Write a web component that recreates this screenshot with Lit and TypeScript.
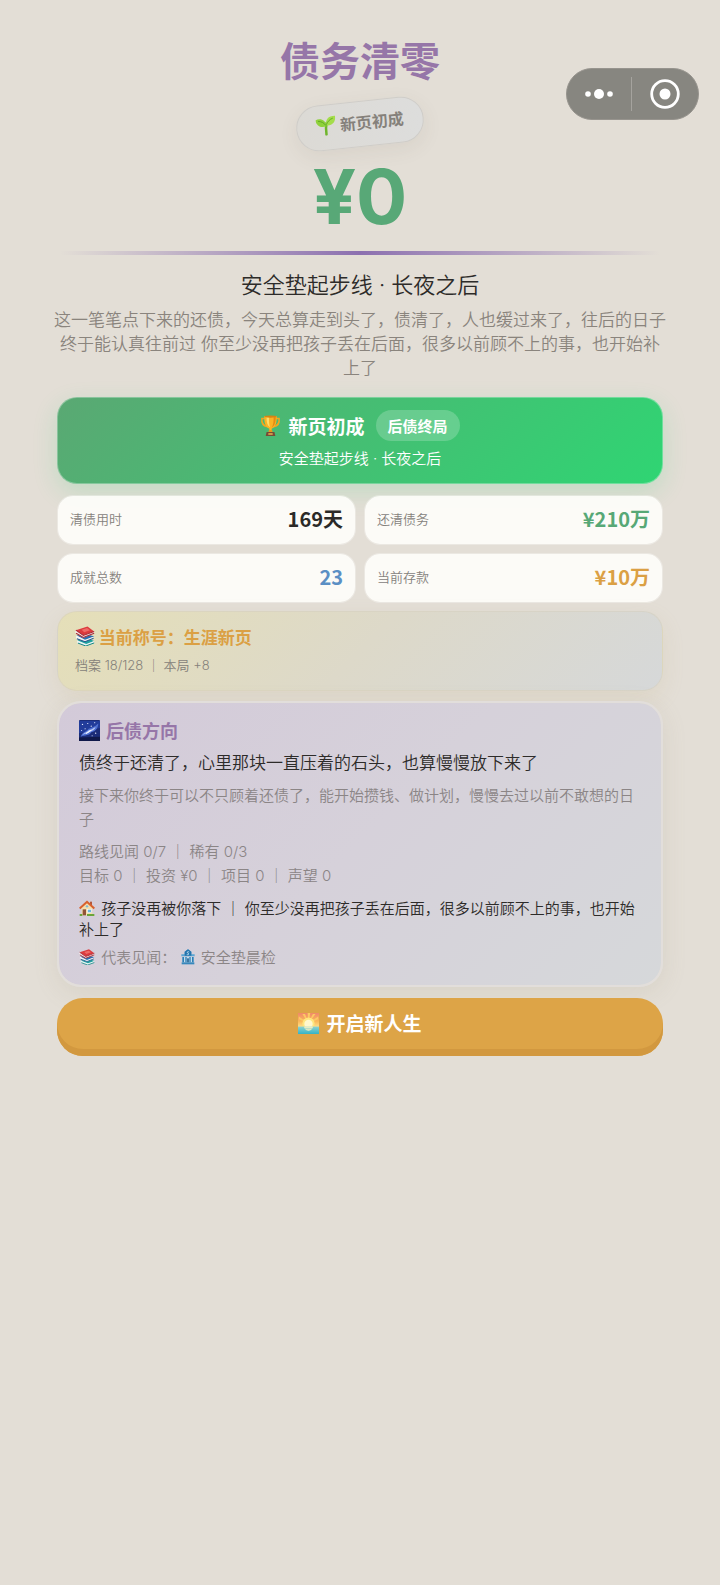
import { LitElement, html, css, svg } from "lit";
import { customElement, property } from "lit/decorators.js";

const glyphs: Record<string, unknown> = {
  seedling: svg`
    <path d="M11.500 23C11.200 17 11.600 13 13 9" fill="none" stroke="#6fb52c" stroke-width="3" stroke-linecap="round"/>
    <path d="M12.500 13C5 15 .5 10.500 0 4.500C6 2 12.500 5 12.500 13Z" fill="#8fd13c"/>
    <path d="M12.500 12C11.500 5 16 .5 24 1.500C24.500 8.500 19.500 13.500 12.500 12Z" fill="#a4dd4b"/>
    <path d="M3 6C7 6.500 10 8.500 12 12M21 4C17 5 14.500 7.500 12.500 11" fill="none" stroke="#5da324" stroke-width="1"/>`,
  trophy: svg`
    <path d="M6 4H2.200C1.500 9 4 12.500 8.500 13.500M18 4H21.800C22.500 9 20 12.500 15.500 13.500" fill="none" stroke="#f2a51f" stroke-width="1.800"/>
    <path d="M5 1H19C19.500 8 18 13.500 13.500 15.500L13 19H11L10.500 15.500C6 13.500 4.500 8 5 1Z" fill="#fbb324"/>
    <path d="M7.500 2.500H10.500C10 7 10.500 11 11.500 14C8.500 12 7.200 8 7.500 2.500Z" fill="#ffdc6a"/>
    <path d="M15.500 2H18C18 8 17 12 13.500 14.500C15.300 11 15.800 7 15.500 2Z" fill="#e58a13"/>
    <ellipse cx="12" cy="1.800" rx="7" ry="1.200" fill="#d98312"/>
    <path d="M10.300 17H13.700L14.500 20H9.500Z" fill="#e99a1c"/>
    <path d="M7.500 19.500H16.500L17.500 24H6.500Z" fill="#7a4a35"/>
    <rect x="9.500" y="20.800" width="5" height="1.800" fill="#e0b04e"/>`,
  books: svg`
    <path d="M3 17.500L13 14L23 18L13.500 22.500Z" fill="#1fa3a0"/>
    <path d="M3 17.500C2 19 2.300 20.500 3.500 21L13 24L23 20V18L13.500 21.500Z" fill="#e9f3f3"/>
    <path d="M3.500 20.500L13 24L23 20.300" fill="none" stroke="#158784" stroke-width="1.200"/>
    <path d="M2 11.500L12 9L23 12.500L12 17Z" fill="#2c6fb0"/>
    <path d="M2 11.500C.8 13 1 14.800 2.500 15.500L12 19L22 15V12.800L12 16.500Z" fill="#f2f2f2"/>
    <path d="M2.300 15.200L12 18.800L22.300 14.800" fill="none" stroke="#24588f" stroke-width="1.300"/>
    <path d="M1 5L15 .5L23 6.500L10 11.500Z" fill="#dc3a3e"/>
    <path d="M1 5C0 6.500 .3 8.500 1.500 9L10 14L23 9V6.500L10 11.200Z" fill="#f4eeee"/>
    <path d="M1.300 8.800L10 13.800L23 8.800M1 5L10 11.300L23 6.500" fill="none" stroke="#a92a34" stroke-width="1.300"/>
    <path d="M8 4.500L14.500 2.500L18 5L11 7.500Z" fill="#ee6a66"/>`,
  galaxy: svg`
    <rect width="24" height="24" rx="1" fill="#1b2c78"/>
    <path d="M0 1H24V9L0 15Z" fill="#223c9a"/>
    <path d="M0 20L24 19V24H0Z" fill="#10194a"/>
    <path d="M2 19C4 13 8 14 11 10C14 9 18 8 22 4C22 9 19 13 14 14C12 18 7 17 2 19Z" fill="#4f70d2"/>
    <path d="M4 17C6 14.500 9 14.500 11.500 11.500C14 11.500 16 9.500 19 8C18 11 15.500 12.500 12.500 13.500C10 16 7 15.500 4 17Z" fill="#b9c8f5"/>
    <path d="M8 15.500L11 13.500L14 11.500" stroke="#f2f5ff" stroke-width="1.200" fill="none"/>
    <g fill="#e8eeff"><circle cx="4" cy="5" r=".8"/><circle cx="10" cy="4" r=".7"/><circle cx="14" cy="7" r=".7"/><circle cx="7" cy="10" r=".7"/><circle cx="19" cy="15" r=".8"/><circle cx="15" cy="18" r=".6"/><circle cx="3" cy="12" r=".6"/><circle cx="18" cy="3" r=".6"/></g>`,
  house: svg`
    <rect x="16.500" y="2.500" width="3" height="6" fill="#b3573a"/>
    <path d="M4 11L12 3.500L20 11V23H4Z" fill="#f6dfae"/>
    <path d="M12 .8L0 11.800L2 13.800L12 4.800L22 13.800L24 11.800Z" fill="#d8622f"/>
    <rect x="5.500" y="14" width="5" height="9" fill="#8f5338"/>
    <rect x="13" y="14" width="5.500" height="5" fill="#6cb5df" stroke="#fff" stroke-width=".8"/>
    <circle cx="12" cy="9.500" r="1.800" fill="#7db8d8"/>
    <path d="M1 21H5V24H1ZM12 21H23V24H12Z" fill="#6ba53a"/>`,
  bank: svg`
    <path d="M7 8V4L12 .5L17 4V8H22V11H2V8Z" fill="#5aa5d2"/>
    <path d="M7 4L12 .5L17 4V10H7Z" fill="#2474ad"/>
    <path d="M13.800 4.500C11 3 9.800 5.500 12 6.200C14.200 7 13 9.300 10.200 8.300" fill="none" stroke="#d8edf8" stroke-width="1.200"/>
    <path d="M3.500 12H20.500V20H3.500Z" fill="#c3dcec"/>
    <path d="M3.500 12H6V20H3.500ZM8 12H10V20H8ZM14 12H16V20H14ZM18 12H20.500V20H18Z" fill="#2c7fb6"/>
    <rect x="10.800" y="14" width="2.400" height="6" fill="#1d5c8c"/>
    <rect x="2.500" y="20" width="19" height="3" fill="#3788bc"/>`,
  sunrise: svg`
    <defs>
      <linearGradient id="sky" x1="0" y1="0" x2="0" y2="1"><stop offset="0" stop-color="#f0886a"/><stop offset=".6" stop-color="#fbb95a"/><stop offset="1" stop-color="#ffe08a"/></linearGradient>
      <linearGradient id="sea" x1="0" y1="0" x2="0" y2="1"><stop offset="0" stop-color="#8ed2cf"/><stop offset="1" stop-color="#35b3c6"/></linearGradient>
    </defs>
    <rect width="24" height="16" fill="url(#sky)"/>
    <path d="M12 12L5 1H8L12 12L11 0H14L12 12L17 1H20L12 12L23 4V7L12 12L1 4V7Z" fill="#fdc964"/>
    <circle cx="12" cy="12" r="7" fill="#ffe57e"/>
    <circle cx="12" cy="12.500" r="4.800" fill="#fff7cf"/>
    <rect y="15.500" width="24" height="8.500" fill="url(#sea)"/>
    <path d="M7 15.500H17C17 18 15 20 12 20.500C9 20 7 18 7 15.500Z" fill="#f6f1c4"/>
    <path d="M8 17.500H16M9.500 19.500H14.500" stroke="#8fd0c4" stroke-width=".8"/>`,
};

@customElement("pic-glyph")
export class PicGlyph extends LitElement {
  @property() name = "";

  static styles = css`
    :host { display: inline-block; width: 1em; height: 1em; vertical-align: -2px; flex: none; }
    svg { display: block; width: 100%; height: 100%; }
  `;

  render() {
    return html`<svg viewBox="0 0 24 24" aria-hidden="true">${glyphs[this.name]}</svg>`;
  }
}

interface Stat { label: string; value: string; tone: string; }

@customElement("app-root")
export class AppRoot extends LitElement {
  private stats: Stat[] = [
    { label: "清债用时", value: "169天", tone: "ink" },
    { label: "还清债务", value: "¥210万", tone: "green" },
    { label: "成就总数", value: "23", tone: "blue" },
    { label: "当前存款", value: "¥10万", tone: "gold" },
  ];

  static styles = css`
    :host {
      display: block;
      min-height: 100vh;
      background: #e3ded6;
      color: #2d2b29;
      font-family: "Noto Sans CJK SC", sans-serif;
      font-size: 15px;
      box-sizing: border-box;
    }
    *, *::before { box-sizing: border-box; }
    h1, h2, h3, p, dl, dt, dd { margin: 0; }
    p { font-family: Inter, "Noto Sans CJK SC", sans-serif; font-weight: 350; }

    .capsule {
      position: absolute;
      top: 68px;
      right: 21px;
      display: grid;
      grid-template-columns: 64fr 1px 66fr;
      align-items: center;
      width: 133px;
      height: 52px;
      border: 1px solid #97948e;
      border-radius: 26px;
      background: #878680;
    }
    .capsule button {
      display: grid;
      place-items: center;
      height: 100%;
      padding: 0;
      border: 0;
      background: none;
    }
    .capsule .bar { height: 34px; background: #a5a39e; }

    .hero {
      display: flex;
      flex-direction: column;
      align-items: center;
      padding: 29px 52px 0;
      text-align: center;
    }
    h1 { color: #9676a8; font-size: 40px; line-height: 60px; font-weight: 700; }
    .badge {
      display: flex;
      align-items: center;
      gap: 4px;
      height: 46px;
      margin-top: 12px;
      padding: 0 19px 4px;
      border: 1px solid #cfcdc9;
      border-radius: 23px;
      background: linear-gradient(90deg, #dcdad5, #dddddc);
      box-shadow: 0 6px 20px rgba(90, 80, 60, 0.08);
      color: #85817b;
      font-size: 16px;
      font-weight: 700;
      transform: rotate(-6deg);
    }
    .badge pic-glyph { font-size: 20px; }
    .amount {
      margin-top: 9px;
      color: #58a877;
      font: 700 76px/80px Inter, sans-serif;
      font-optical-sizing: none;
    }
    .rule {
      align-self: stretch;
      height: 4px;
      margin: 15px 8px 0;
      background: linear-gradient(90deg, transparent, #8c70b0 50%, transparent);
    }
    .subtitle { margin-top: 14px; font-size: 22px; line-height: 32px; }
    .story { margin-top: 7px; color: #8a847d; font-size: 17px; line-height: 24px; text-wrap: nowrap; }

    .cards { display: flex; flex-direction: column; padding: 0 57px; margin-top: 17px; }

    .banner {
      display: flex;
      flex-direction: column;
      align-items: center;
      gap: 7px;
      padding: 12px 16px 13px;
      border: 1px solid rgba(255, 255, 255, 0.3);
      border-radius: 20px;
      background: linear-gradient(135deg, #5aa873, #2fd573) border-box;
      box-shadow: 0 8px 24px rgba(46, 204, 113, 0.18);
      color: #fff;
    }
    .banner-head { display: flex; align-items: center; }
    .banner-head pic-glyph { font-size: 21px; margin-right: 7px; }
    .banner h2 { font-size: 19px; line-height: 31px; font-weight: 700; }
    .tag {
      margin-left: 11px;
      padding: 0 12px;
      border-radius: 16px;
      background: rgba(255, 255, 255, 0.2);
      font-size: 15px;
      line-height: 31px;
      font-weight: 700;
    }
    .banner p { line-height: 22px; }

    .stats { display: grid; grid-template-columns: 1fr 1fr; gap: 8px; margin-top: 11px; }
    .stat {
      display: flex;
      align-items: center;
      justify-content: space-between;
      height: 50px;
      padding: 0 12px 3px;
      border: 1px solid rgba(255, 255, 255, 0.3);
      border-radius: 16px;
      background: rgba(255, 255, 252, 0.88) padding-box;
    }
    .stat dt { color: #85817c; font-size: 13px; font-weight: 350; }
    .stat dd { font-size: 20px; font-weight: 700; }
    .ink { color: #2b2a28; }
    .green { color: #57a876; }
    .blue { color: #5b8fc4; }
    .gold { color: #dba044; }

    .honor {
      margin-top: 8px;
      padding: 13px 17px 15px;
      border: 1px solid rgba(215, 208, 190, 0.6);
      border-radius: 20px;
      background: linear-gradient(135deg, #e5dfb8, #ddd9c9 50%, #d6d8d9);
      box-shadow: 0 8px 22px rgba(190, 170, 110, 0.14);
    }
    .honor h3 { color: #dba044; font-size: 17px; line-height: 24px; font-weight: 700; }
    .honor p { margin-top: 6px; color: #85817a; font-size: 13px; line-height: 20px; }
    .honor pic-glyph { font-size: 20px; }

    .path {
      display: flex;
      flex-direction: column;
      gap: 8px;
      margin-top: 10px;
      padding: 15px 20px 17px;
      border: 2px solid #e2dedb;
      border-radius: 24px;
      background: linear-gradient(135deg, #d3cad9, #d6d1da 50%, #d6d8da) padding-box;
      box-shadow: 0 6px 24px rgba(150, 140, 110, 0.14);
      line-height: 24px;
    }
    .path h3 { color: #9676a8; font-size: 18px; font-weight: 700; }
    .path h3 pic-glyph { font-size: 21px; margin-right: 2px; vertical-align: -3px; }
    .path p pic-glyph { font-size: 16px; }
    .kin pic-glyph, .seen pic-glyph:first-child { margin-right: 2px; }
    .lead { font-size: 17px; line-height: 26px; }
    .soft { color: #8b8586; }
    .kin { margin-top: 2px; line-height: 21px; }
    .seen { line-height: 20px; }

    .restart {
      display: flex;
      align-items: center;
      justify-content: center;
      gap: 7px;
      width: 100%;
      height: 58px;
      margin-top: 11px;
      padding: 0 16px 8px;
      border: 0;
      border-radius: 26px;
      background: #dda447;
      box-shadow: inset 0 -7px 0 #d2983f;
      color: #fff;
      font: 700 19px/28px "Noto Sans CJK SC", sans-serif;
    }
    .restart pic-glyph { font-size: 21px; }
  `;

  render() {
    return html`
      <nav class="capsule">
        <button aria-label="更多">
          <svg width="30" height="12" viewBox="0 0 30 12" fill="#fff">
            <circle cx="4" cy="6" r="2.800" /><circle cx="15" cy="6" r="5" /><circle cx="26" cy="6" r="2.800" />
          </svg>
        </button>
        <span class="bar"></span>
        <button aria-label="关闭">
          <svg width="30" height="30" viewBox="0 0 30 30">
            <circle cx="15" cy="15" r="13.300" fill="none" stroke="#fff" stroke-width="2.800" />
            <circle cx="15" cy="15" r="5.500" fill="#fff" />
          </svg>
        </button>
      </nav>

      <header class="hero">
        <h1>债务清零</h1>
        <div class="badge"><pic-glyph name="seedling"></pic-glyph>新页初成</div>
        <div class="amount">¥0</div>
        <div class="rule"></div>
        <p class="subtitle">安全垫起步线 · 长夜之后</p>
        <p class="story">
          这一笔笔点下来的还债，今天总算走到头了，债清了，人也缓过来了，往后的日子<br />终于能认真往前过 你至少没再把孩子丢在后面，很多以前顾不上的事，也开始补<br />上了
        </p>
      </header>

      <main class="cards">
        <section class="banner">
          <div class="banner-head">
            <pic-glyph name="trophy"></pic-glyph>
            <h2>新页初成</h2>
            <span class="tag">后债终局</span>
          </div>
          <p>安全垫起步线 · 长夜之后</p>
        </section>

        <dl class="stats">
          ${this.stats.map(
            (s) => html`<div class="stat"><dt>${s.label}</dt><dd class=${s.tone}>${s.value}</dd></div>`
          )}
        </dl>

        <section class="honor">
          <h3><pic-glyph name="books"></pic-glyph> 当前称号：生涯新页</h3>
          <p>档案 18/128 ｜ 本局 +8</p>
        </section>

        <section class="path">
          <h3><pic-glyph name="galaxy"></pic-glyph> 后债方向</h3>
          <p class="lead">债终于还清了，心里那块一直压着的石头，也算慢慢放下来了</p>
          <p class="soft">接下来你终于可以不只顾着还债了，能开始攒钱、做计划，慢慢去过以前不敢想的日子</p>
          <p class="soft">路线见闻 0/7 ｜ 稀有 0/3<br />目标 0 ｜ 投资 ¥0 ｜ 项目 0 ｜ 声望 0</p>
          <p class="kin"><pic-glyph name="house"></pic-glyph> 孩子没再被你落下 ｜ 你至少没再把孩子丢在后面，很多以前顾不上的事，也开始补上了</p>
          <p class="soft seen"><pic-glyph name="books"></pic-glyph> 代表见闻： <pic-glyph name="bank"></pic-glyph> 安全垫晨检</p>
        </section>

        <button class="restart"><pic-glyph name="sunrise"></pic-glyph>开启新人生</button>
      </main>
    `;
  }
}
